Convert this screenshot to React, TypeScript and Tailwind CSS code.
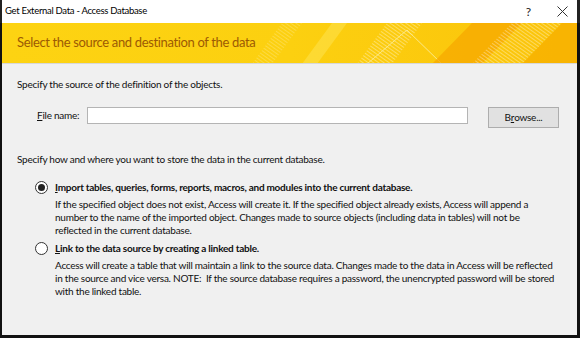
import React from "react";

const font = { fontFamily: 'Lato, "Noto Sans", sans-serif' };

function Radio({ checked }: { checked?: boolean }) {
  return (
    <span className="w-[13px] h-[13px] shrink-0 rounded-full border border-[#333] bg-white flex items-center justify-center">
      {checked && <span className="w-[7px] h-[7px] rounded-full bg-[#222]" />}
    </span>
  );
}

export default function App() {
  return (
    <div
      className="w-[580px] h-[338px] overflow-hidden bg-[#111] flex flex-col pl-[2px] pr-[3px] pb-[3px]"
      style={font}
    >
      {/* title bar */}
      <div className="h-[23px] bg-white flex items-center justify-between shrink-0 -ml-[2px] -mr-[3px] pl-[3px] pr-[9px] border-l-2 border-r-[3px] border-[#222]">
        <span className="text-[9.5px] text-black tracking-[-0.3px]">Get External Data - Access Database</span>
        <div className="flex items-center gap-[26px] text-[12px] text-[#222]">
          <span>?</span>
          <svg width="11" height="11" viewBox="0 0 11 11">
            <path d="M0.5 0.5 L10.5 10.5 M10.5 0.5 L0.5 10.5" stroke="#333" strokeWidth="1" />
          </svg>
        </div>
      </div>

      <div className="flex-1 flex flex-col bg-[#f0f0f0]">
        {/* banner */}
        <div className="relative h-[41px] shrink-0 overflow-hidden bg-gradient-to-r from-[#fdd312] via-[#fcd010] to-[#fbc30a] flex items-center pl-[15px] border-b border-[#d8d8d8]">
          <svg className="absolute inset-0" width="575" height="41" viewBox="0 0 575 41" preserveAspectRatio="none">
            <defs>
              <pattern id="st" width="3" height="3" patternUnits="userSpaceOnUse" patternTransform="rotate(-55)">
                <rect width="1" height="3" fill="#fff" opacity="0.35" />
              </pattern>
            </defs>
            <polygon points="300,41 330,0 345,0 315,41" fill="#fde14a" opacity="0.6" />
            <polygon points="355,41 385,0 420,0 390,41" fill="url(#st)" />
            <polygon points="365,41 405,7 440,41" fill="none" stroke="#fbe98a" strokeWidth="1" />
            <polygon points="430,41 470,0 520,0 480,41" fill="#f7a800" opacity="0.75" />
            <polygon points="470,41 510,0 560,0 520,41" fill="url(#st)" />
            <polygon points="520,41 560,0 575,0 575,41" fill="#f8b000" opacity="0.8" />
            <polygon points="250,41 280,0 300,0 270,41" fill="url(#st)" opacity="0.6" />
          </svg>
          <span className="relative text-[13px] text-[#9c5a04] tracking-[-0.35px]">
            Select the source and destination of the data
          </span>
        </div>

        {/* body */}
        <div className="flex flex-col pl-[15px] pr-[16px] text-[10px] text-[#111] leading-[13px] tracking-[-0.25px] whitespace-nowrap">
          <div className="mt-[14px]">Specify the source of the definition of the objects.</div>

          <div className="flex items-start mt-[16px] pl-[20px]">
            <span className="w-[50px] mt-[2px]">
              <span className="underline">F</span>ile name:
            </span>
            <div className="w-[381px] h-[17px] bg-white border border-[#b4b4b4]" />
            <div className="ml-[20px] w-[71px] h-[21px] bg-[#e1e1e1] border border-[#adadad] flex items-center justify-center">
              B<span className="underline">r</span>owse...
            </div>
          </div>

          <div className="mt-[25px]">Specify how and where you want to store the data in the current database.</div>

          <div className="mt-[15px] pl-[18px] flex flex-col">
            <div className="flex items-center">
              <Radio checked />
              <span className="ml-[7px] font-bold">
                <span className="underline">I</span>mport tables, queries, forms, reports, macros, and modules into the current database.
              </span>
            </div>
            <div className="pl-[20px] mt-[4px] flex flex-col">
              <span>If the specified object does not exist, Access will create it. If the specified object already exists, Access will append a</span>
              <span>number to the name of the imported object. Changes made to source objects (including data in tables) will not be</span>
              <span>reflected in the current database.</span>
            </div>

            <div className="flex items-center mt-[5px]">
              <Radio />
              <span className="ml-[7px] font-bold">
                <span className="underline">L</span>ink to the data source by creating a linked table.
              </span>
            </div>
            <div className="pl-[20px] mt-[4px] flex flex-col">
              <span>Access will create a table that will maintain a link to the source data. Changes made to the data in Access will be reflected</span>
              <span>in the source and vice versa. NOTE:&nbsp; If the source database requires a password, the unencrypted password will be stored</span>
              <span>with the linked table.</span>
            </div>
          </div>
        </div>
      </div>
    </div>
  );
}
